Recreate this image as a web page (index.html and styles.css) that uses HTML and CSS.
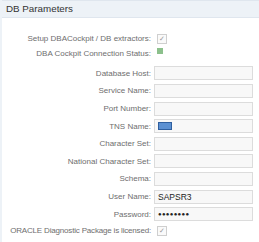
FILE: index.html
```html
<!DOCTYPE html>
<html lang="en">
<head>
    <meta charset="UTF-8">
    <title>DB Parameters</title>
    <link rel="stylesheet" href="styles.css">
</head>
<body>
    <div class="panel">
        <div class="header">DB Parameters</div>

        <div class="form">
            <div class="row row-check">
                <span class="label">Setup DBACockpit / DB extractors:</span>
                <span class="check">&#10003;</span>
            </div>
            <div class="row row-status">
                <span class="label">DBA Cockpit Connection Status:</span>
                <span class="status"></span>
            </div>

            <div class="row row-field">
                <span class="label">Database Host:</span>
                <div class="input"></div>
            </div>
            <div class="row row-field">
                <span class="label">Service Name:</span>
                <div class="input"></div>
            </div>
            <div class="row row-field">
                <span class="label">Port Number:</span>
                <div class="input"></div>
            </div>
            <div class="row row-field">
                <span class="label">TNS Name:</span>
                <div class="input"><span class="mark"></span></div>
            </div>
            <div class="row row-field">
                <span class="label">Character Set:</span>
                <div class="input"></div>
            </div>
            <div class="row row-field">
                <span class="label">National Character Set:</span>
                <div class="input"></div>
            </div>
            <div class="row row-field">
                <span class="label">Schema:</span>
                <div class="input"></div>
            </div>
            <div class="row row-field">
                <span class="label">User Name:</span>
                <div class="input value">SAPSR3</div>
            </div>
            <div class="row row-field">
                <span class="label">Password:</span>
                <div class="input value dots">&#9679;&#9679;&#9679;&#9679;&#9679;&#9679;&#9679;&#9679;</div>
            </div>

            <div class="row row-check last">
                <span class="label narrow">ORACLE Diagnostic Package is licensed:</span>
                <span class="check">&#10003;</span>
            </div>
        </div>
    </div>
</body>
</html>
```

FILE: styles.css
```css
body {
    margin: 0;
    background: #ffffff;
    font-family: "Liberation Sans", Arial, sans-serif;
    color: #6e6e6e;
}
.panel {
    width: 259px;
    height: 242px;
    border-left: 2px solid #edf2f7;
    box-sizing: border-box;
}
.header {
    height: 16px;
    line-height: 16px;
    padding-left: 4px;
    background-color: #edf2f7;
    border-top: 1px solid #dfe6ee;
    border-bottom: 1px solid #dfe6ee;
    font-size: 9.8px;
    color: #333;
}
.form {
    padding-top: 13px;
}
.row {
    display: flex;
    align-items: center;
    font-size: 8px;
}
.label {
    width: 149px;
    text-align: right;
    flex-shrink: 0;
    margin-right: 3px;
}
.narrow {
    letter-spacing: -0.18px;
}
.row-check {
    height: 15px;
}
.row-status {
    height: 15px;
    margin-bottom: 3.6px;
}
.row-field {
    height: 17.6px;
}
.last {
    height: 16px;
}
.check {
    width: 8px;
    height: 8px;
    margin-left: 3px;
    border: 1px solid #cfcfcf;
    background: #fafafa;
    color: #999;
    font-size: 7px;
    line-height: 8px;
    text-align: center;
}
.status {
    width: 6px;
    height: 6px;
    margin-left: 3px;
    margin-top: -5px;
    background-color: #8cc08c;
}
.input {
    width: 99px;
    height: 14px;
    box-sizing: border-box;
    border: 1px solid #dcdcdc;
    background-color: #f8f8f8;
    display: flex;
    align-items: center;
    padding-left: 3px;
}
.value {
    color: #222;
    font-size: 8.5px;
}
.dots {
    font-size: 6px;
    letter-spacing: 0.3px;
}
.mark {
    width: 14px;
    height: 8px;
    box-sizing: border-box;
    background-color: #5b90d2;
    border: 1px solid #2f5f9f;
}
```
